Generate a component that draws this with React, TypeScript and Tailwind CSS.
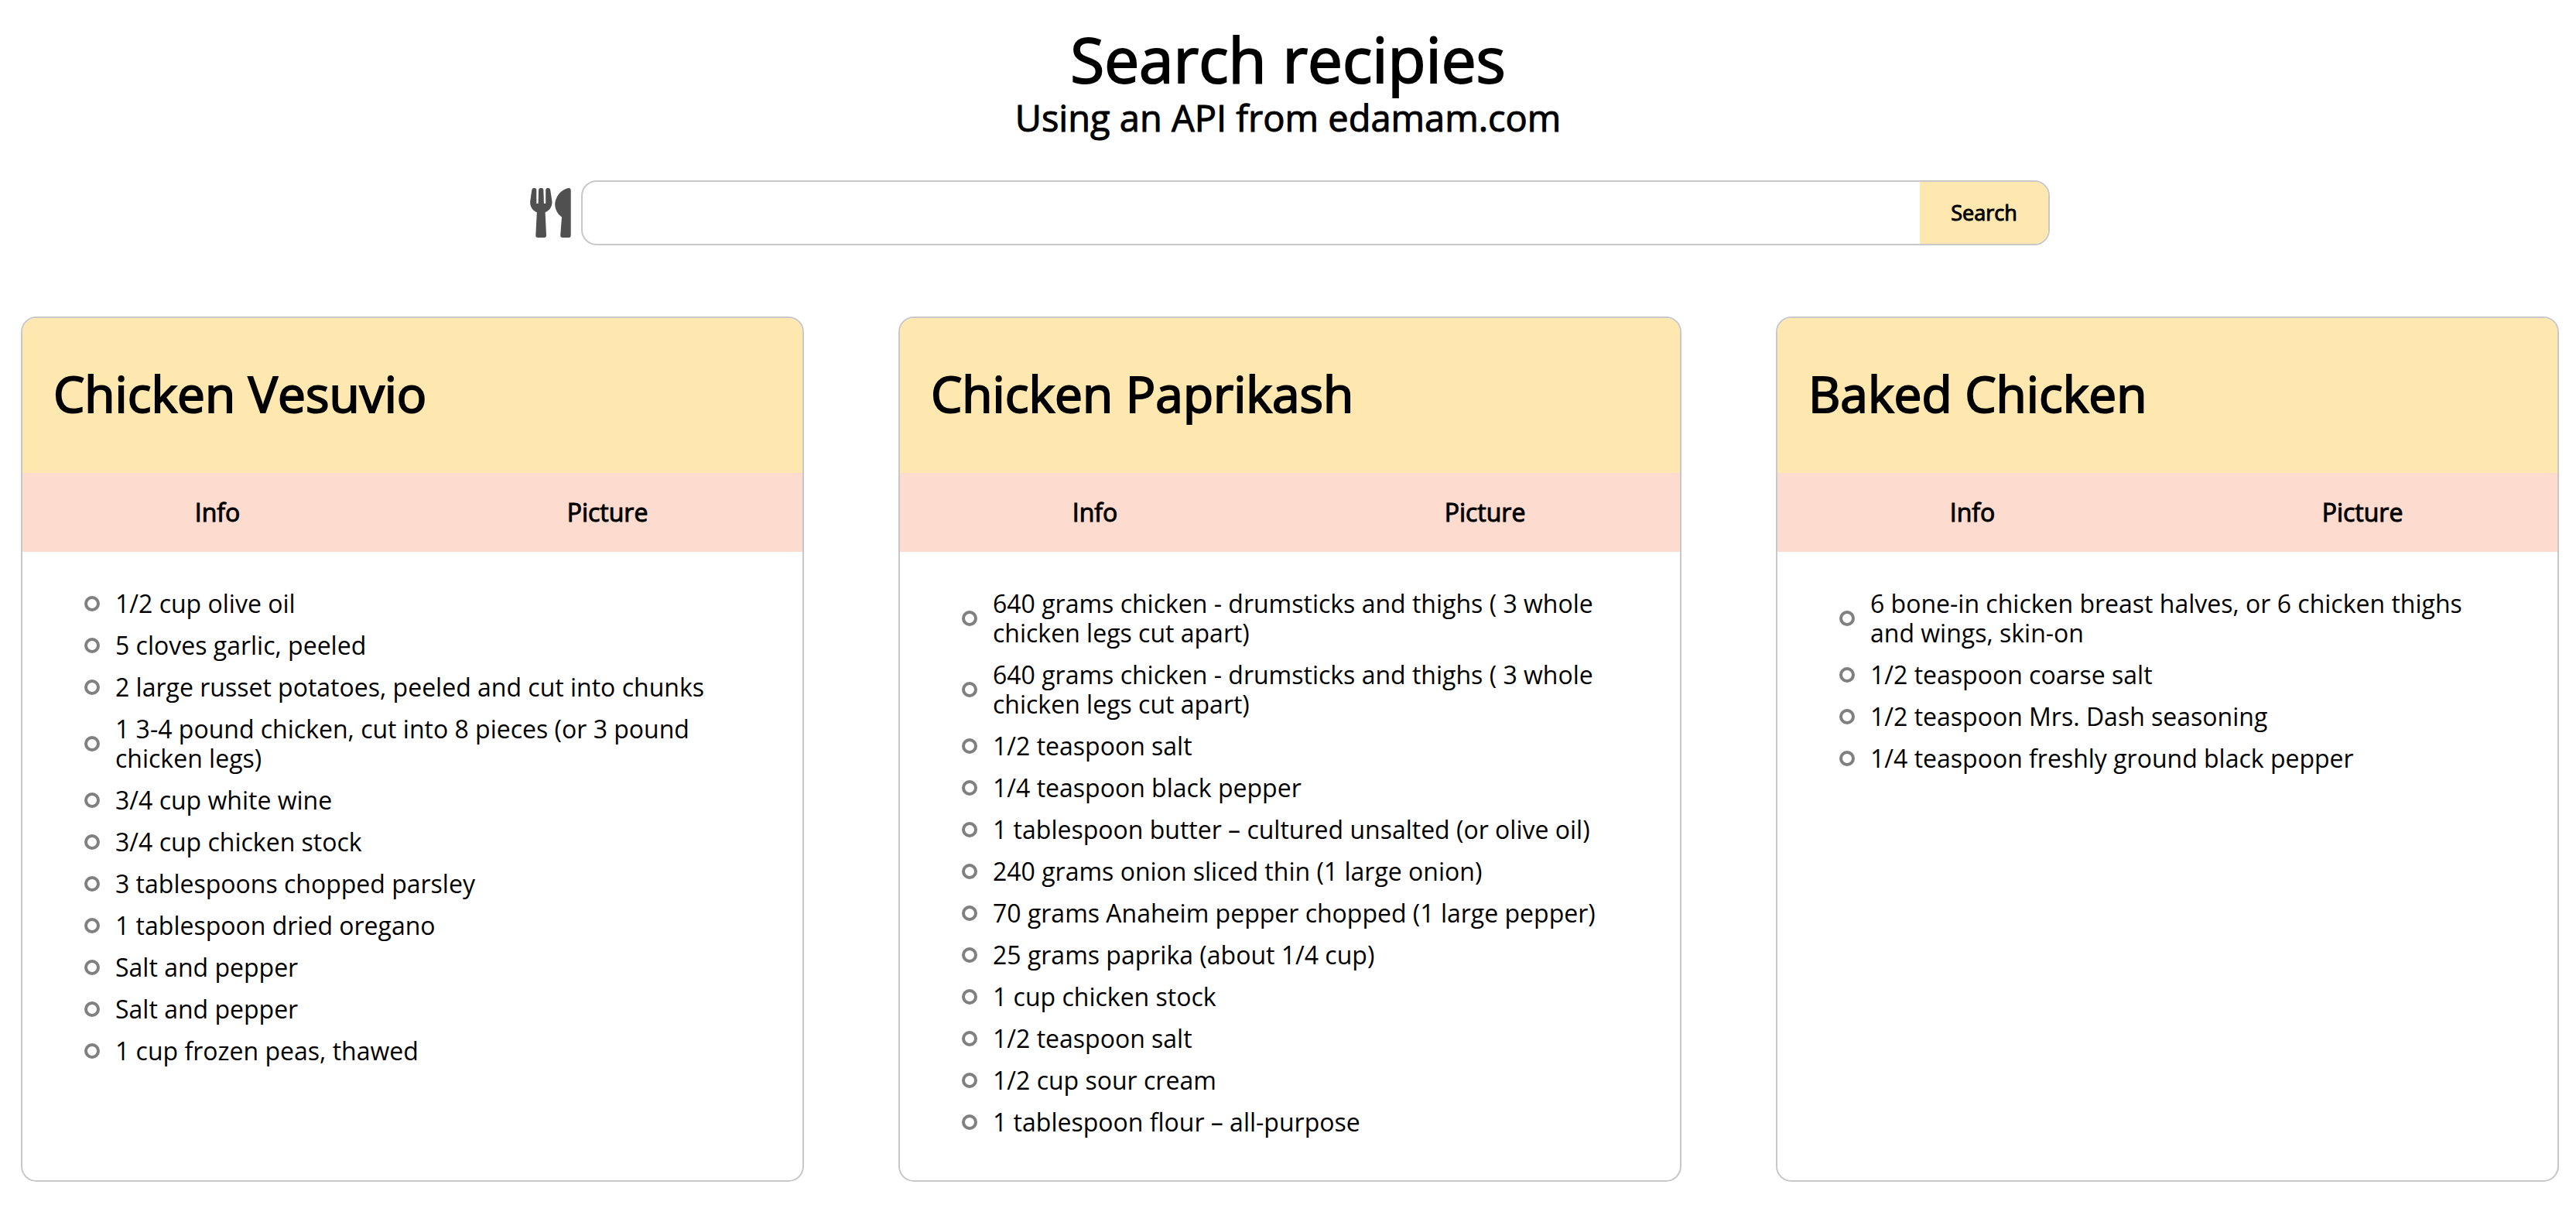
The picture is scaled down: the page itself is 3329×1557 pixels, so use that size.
type Recipe = { title: string; ingredients: string[] };

const recipes: Recipe[] = [
  {
    title: "Chicken Vesuvio",
    ingredients: [
      "1/2 cup olive oil",
      "5 cloves garlic, peeled",
      "2 large russet potatoes, peeled and cut into chunks",
      "1 3-4 pound chicken, cut into 8 pieces (or 3 pound chicken legs)",
      "3/4 cup white wine",
      "3/4 cup chicken stock",
      "3 tablespoons chopped parsley",
      "1 tablespoon dried oregano",
      "Salt and pepper",
      "Salt and pepper",
      "1 cup frozen peas, thawed",
    ],
  },
  {
    title: "Chicken Paprikash",
    ingredients: [
      "640 grams chicken - drumsticks and thighs ( 3 whole chicken legs cut apart)",
      "640 grams chicken - drumsticks and thighs ( 3 whole chicken legs cut apart)",
      "1/2 teaspoon salt",
      "1/4 teaspoon black pepper",
      "1 tablespoon butter – cultured unsalted (or olive oil)",
      "240 grams onion sliced thin (1 large onion)",
      "70 grams Anaheim pepper chopped (1 large pepper)",
      "25 grams paprika (about 1/4 cup)",
      "1 cup chicken stock",
      "1/2 teaspoon salt",
      "1/2 cup sour cream",
      "1 tablespoon flour – all-purpose",
    ],
  },
  {
    title: "Baked Chicken",
    ingredients: [
      "6 bone-in chicken breast halves, or 6 chicken thighs and wings, skin-on",
      "1/2 teaspoon coarse salt",
      "1/2 teaspoon Mrs. Dash seasoning",
      "1/4 teaspoon freshly ground black pepper",
    ],
  },
];

function CutleryIcon() {
  return (
    <svg viewBox="-5 0 64 64" className="size-16 shrink-0 fill-[#505050]" aria-hidden="true">
      <path d="M5 0H6Q8.3 0 8.3 3V20H10.6L11 3Q11.2 0 13.4 0H15Q17.2 0 17.4 3L17.9 20H20.2V3Q20.2 0 22.5 0H23.6Q26 0 26.3 3L28.4 17C29 24 25 29 19.6 31.2L21 61Q21 64 18.4 64H10Q7.2 64 7.3 61L8.8 31.2C3.4 29 -.4 24 .2 17L2.2 3Q2.5 0 5 0Z" />
      <path d="M50 0Q52.7 0 52.7 3V61Q52.7 64 50 64H42Q39 64 39.2 61L41 37.5C36 34 32.2 28 32.2 21C32.4 11 41 1 50 0Z" />
    </svg>
  );
}

function RecipeCard({ title, ingredients }: Recipe) {
  return (
    <article className="flex flex-col overflow-hidden rounded-[20px] border-2 border-[#c8c8c8] bg-white">
      <h3 className="bg-[#ffe7b0] px-10 pt-[60px] pb-16 text-[64px] leading-[76px] [-webkit-text-stroke:2px_black]">
        {title}
      </h3>
      <div className="grid grid-cols-2 bg-[#fddbce]">
        <button type="button" className="py-8 text-[32px] leading-[38px] [-webkit-text-stroke:1px_black]">
          Info
        </button>
        <button type="button" className="py-8 text-[32px] leading-[38px] [-webkit-text-stroke:1px_black]">
          Picture
        </button>
      </div>
      <ul className="flex flex-col gap-4 px-20 pt-12 pb-14 text-[32px] leading-[38px]">
        {ingredients.map((ingredient, index) => (
          <li key={index} className="flex items-center gap-5">
            <span className="size-5 shrink-0 rounded-full border-4 border-[#808080]" />
            <span>{ingredient}</span>
          </li>
        ))}
      </ul>
    </article>
  );
}

export default function App() {
  return (
    <div className="bg-white pt-7 pb-[30px] font-['Open_Sans',sans-serif] text-black">
      <header className="text-center">
        <h1 className="text-[80px] leading-[96px] [-webkit-text-stroke:2px_black]">Search recipies</h1>
        <h2 className="text-[47px] leading-[56px] [-webkit-text-stroke:1px_black]">Using an API from edamam.com</h2>
      </header>

      <form className="mt-[53px] flex items-center justify-center gap-[7px]" onSubmit={(e) => e.preventDefault()}>
        <label htmlFor="recipe-query" aria-label="Search recipes">
          <CutleryIcon />
        </label>
        <div className="flex h-[84px] w-[57%] overflow-hidden rounded-[20px] border-2 border-[#c8c8c8]">
          <input id="recipe-query" type="text" className="min-w-0 flex-1 px-6 text-[32px] outline-none" />
          <button type="submit" className="bg-[#ffe7b0] px-10 text-[27px] [-webkit-text-stroke:1px_black]">
            Search
          </button>
        </div>
      </form>

      <main className="mt-[92px] grid grid-cols-3 gap-[122px] pr-[22px] pl-[27px]">
        {recipes.map((recipe) => (
          <RecipeCard key={recipe.title} {...recipe} />
        ))}
      </main>
    </div>
  );
}
